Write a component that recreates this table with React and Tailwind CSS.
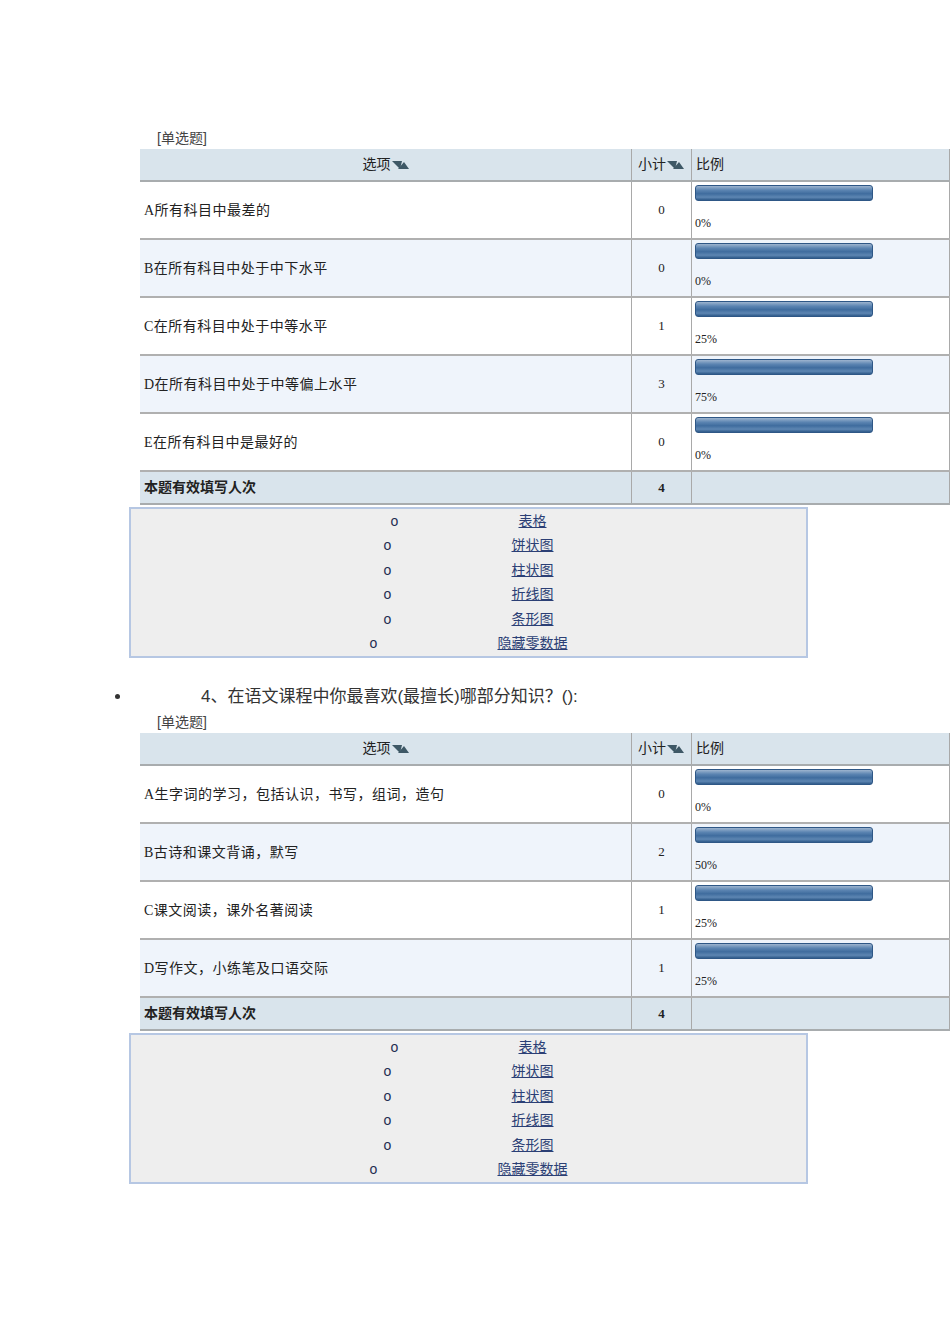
const serif = { fontFamily: '"Liberation Serif", "Noto Sans CJK SC", serif' };
const sans = { fontFamily: '"Liberation Sans", "Noto Sans CJK SC", sans-serif' };

function SortIcon() {
  return (
    <svg width="17" height="10" viewBox="0 0 17 10" className="ml-[1px] inline-block">
      <polygon points="0,1 10,1 8,9" fill="#3e5866" />
      <polygon points="6,9 12,2 17,9" fill="#3e5866" />
    </svg>
  );
}

function Bar() {
  return (
    <div className="h-[16px] w-[178px] rounded-[3px] border border-[#2e5786] bg-[linear-gradient(to_bottom,#9db4cf_0%,#5b84b1_30%,#3f6c9e_55%,#5d86b2_80%,#2f5a8a_100%)]" />
  );
}

function ResultTable({ rows, total }) {
  return (
    <div className="ml-[140px] w-[810px] text-[13px] text-[#222]">
      <div className="flex h-[33px] border-b-2 border-[#a8acae] bg-[#d9e4ec] text-[14px]" style={sans}>
        <div className="flex w-[491px] items-center justify-center">
          选项<SortIcon />
        </div>
        <div className="flex w-[60px] items-center border-l border-[#a9a9a9] pl-[6px]">
          小计<SortIcon />
        </div>
        <div className="flex flex-1 items-center border-l border-r border-[#a9a9a9] pl-[4px]">比例</div>
      </div>
      {rows.map((r, i) => (
        <div
          key={r.label}
          className={`flex h-[58px] border-b-2 border-[#b0b0b0] ${i % 2 ? "bg-[#eff4fb]" : "bg-white"}`}
          style={serif}
        >
          <div className="flex w-[491px] items-center pl-[4px] text-[14px] tracking-[0.5px]">{r.label}</div>
          <div className="flex w-[60px] items-center justify-center border-l border-[#a9a9a9]">{r.count}</div>
          <div className="flex-1 border-l border-r border-[#a9a9a9] pl-[3px] pt-[3px]">
            <Bar />
            <div className="mt-[15px] text-[12px] leading-[14px]">{r.pct}</div>
          </div>
        </div>
      ))}
      <div className="flex h-[33px] border-b-2 border-[#a8acae] bg-[#d9e4ec] font-bold">
        <div className="flex w-[491px] items-center pl-[4px] text-[14px]" style={sans}>本题有效填写人次</div>
        <div className="flex w-[60px] items-center justify-center border-l border-[#a9a9a9]" style={serif}>{total}</div>
        <div className="flex-1 border-l border-r border-[#a9a9a9]" />
      </div>
    </div>
  );
}

function ChartMenu() {
  const items = ["表格", "饼状图", "柱状图", "折线图", "条形图", "隐藏零数据"];
  return (
    <div className="ml-[129px] mt-[2px] w-[679px] border-2 border-[#b6c7e3] bg-[#eeeeee] text-[14px]" style={sans}>
      {items.map((t) => (
        <div key={t} className="flex h-[24.5px] items-center justify-center">
          <span className="w-[128px] text-[#1f2d52]">o</span>
          <span className="text-[#2b3f75] underline">{t}</span>
        </div>
      ))}
    </div>
  );
}

export default function App() {
  const q3 = [
    { label: "A所有科目中最差的", count: 0, pct: "0%" },
    { label: "B在所有科目中处于中下水平", count: 0, pct: "0%" },
    { label: "C在所有科目中处于中等水平", count: 1, pct: "25%" },
    { label: "D在所有科目中处于中等偏上水平", count: 3, pct: "75%" },
    { label: "E在所有科目中是最好的", count: 0, pct: "0%" },
  ];
  const q4 = [
    { label: "A生字词的学习，包括认识，书写，组词，造句", count: 0, pct: "0%" },
    { label: "B古诗和课文背诵，默写", count: 2, pct: "50%" },
    { label: "C课文阅读，课外名著阅读", count: 1, pct: "25%" },
    { label: "D写作文，小练笔及口语交际", count: 1, pct: "25%" },
  ];

  return (
    <div className="h-[1344px] w-[950px] bg-white pt-[127px]" style={sans}>
      <div className="h-[22px] pl-[157px] text-[14px] leading-[22px] text-[#444]">[单选题]</div>
      <ResultTable rows={q3} total={4} />
      <ChartMenu />

      <div className="mt-[24px] flex h-[29px] items-center text-[17px] text-[#333]">
        <span className="ml-[115px] flex w-[86px] items-center">
          <span className="h-[5px] w-[5px] rounded-full bg-[#333]" />
        </span>
        <span>4、在语文课程中你最喜欢(最擅长)哪部分知识？():</span>
      </div>
      <div className="h-[22px] pl-[157px] text-[14px] leading-[22px] text-[#444]">[单选题]</div>
      <ResultTable rows={q4} total={4} />
      <ChartMenu />
    </div>
  );
}
